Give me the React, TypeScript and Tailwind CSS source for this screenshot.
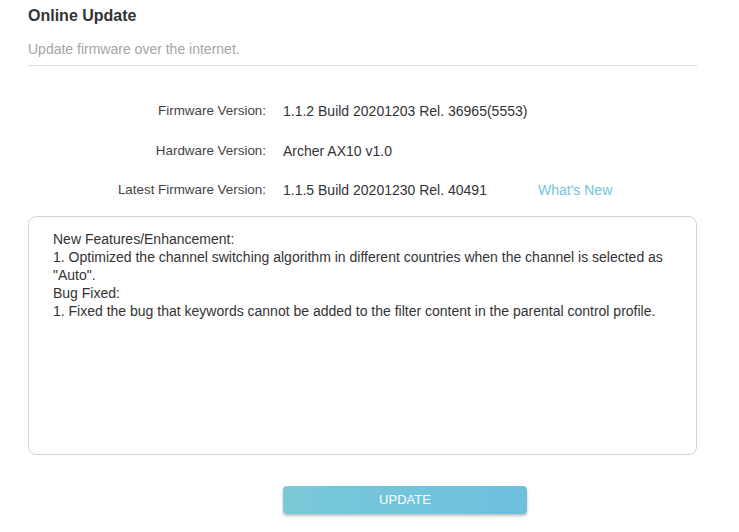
export default function App() {
  const rows = [
    { label: 'Firmware Version:', value: '1.1.2 Build 20201203 Rel. 36965(5553)' },
    { label: 'Hardware Version:', value: 'Archer AX10 v1.0' },
    { label: 'Latest Firmware Version:', value: '1.1.5 Build 20201230 Rel. 40491', link: true },
  ]

  return (
    <div className="w-[739px] h-[532px] bg-white font-['Liberation_Sans',Arial,sans-serif] text-[#333] overflow-hidden">
      <div className="px-7 pt-[6px]">
        {/* Header */}
        <h1 className="text-base font-bold leading-5 text-[#333]">Online Update</h1>
        <p className="mt-[13px] text-sm leading-5 text-[#a5a5a5]">Update firmware over the internet.</p>
        <div className="mt-[6px] w-[669px] h-px bg-[#d9d9d9]" />

        {/* Info rows */}
        <div className="mt-[35px] flex flex-col gap-[19.5px]">
          {rows.map((row) => (
            <div key={row.label} className="flex items-center h-5 text-sm">
              <span className="w-[238px] text-right text-[13.4px] text-[#444]">{row.label}</span>
              <span className="ml-[17px] w-[255px] text-[#333]">{row.value}</span>
              {row.link && <a className="text-[#74c3dc] cursor-pointer">What&apos;s New</a>}
            </div>
          ))}
        </div>

        {/* Release notes */}
        <div className="mt-[16px] w-[669px] h-[239px] border border-[#d4d4d4] rounded-lg px-6 pt-[13px] text-sm leading-[18px] text-[#333]">
          <p>New Features/Enhancement:</p>
          <p>1. Optimized the channel switching algorithm in different countries when the channel is selected as "Auto".</p>
          <p>Bug Fixed:</p>
          <p>1. Fixed the bug that keywords cannot be added to the filter content in the parental control profile.</p>
        </div>

        {/* Action */}
        <div className="mt-[31px] pl-[255px]">
          <button className="w-[244px] h-[28px] rounded bg-gradient-to-r from-[#79c9d8] to-[#6dbfdf] text-white text-[13px] shadow-[0_2px_3px_rgba(0,0,0,0.25)]">
            UPDATE
          </button>
        </div>
      </div>
    </div>
  )
}
